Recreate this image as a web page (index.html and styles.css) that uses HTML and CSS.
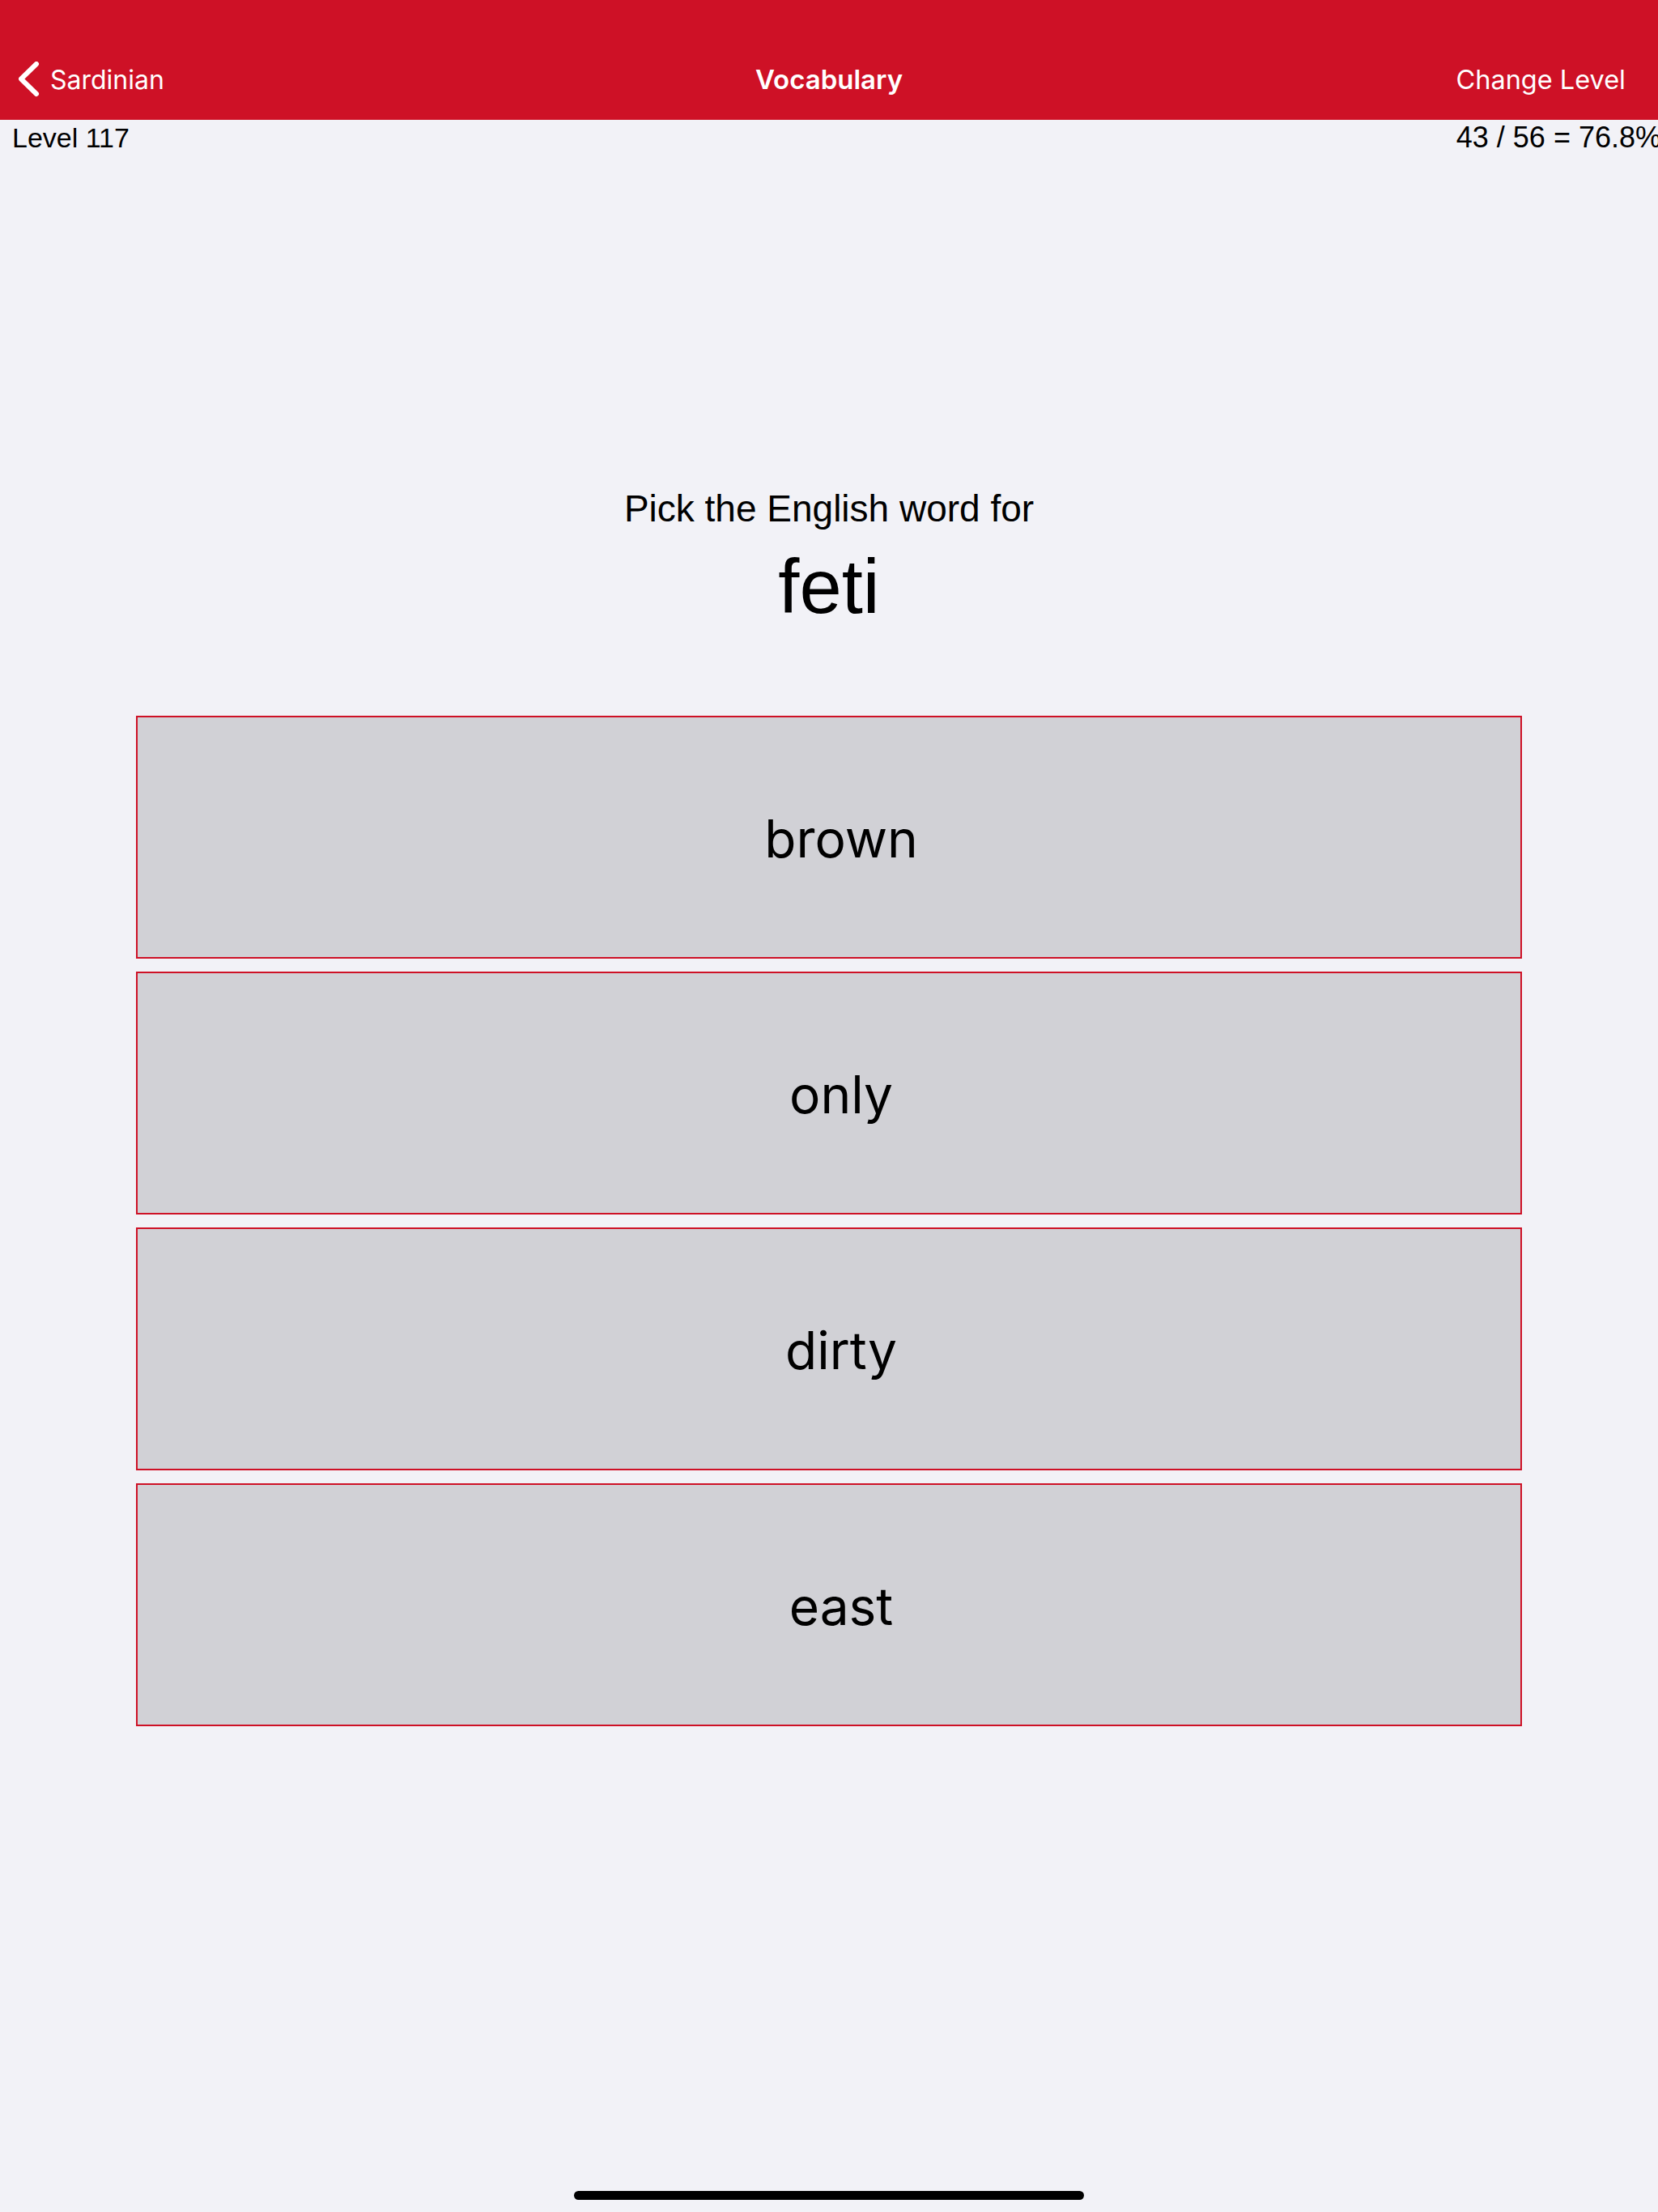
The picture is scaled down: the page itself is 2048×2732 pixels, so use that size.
FILE: index.html
```html
<!DOCTYPE html>
<html lang="en">
<head>
<meta charset="utf-8">
<title>Vocabulary</title>
<link rel="stylesheet" href="styles.css">
</head>
<body>
<div class="screen">
  <header class="navbar">
    <div class="nav-row">
      <a class="nav-back" href="#">
        <svg class="chevron" width="26" height="44" viewBox="0 0 26 44" aria-hidden="true">
          <path d="M22 3 L3 21.5 L22 40" fill="none" stroke="#fff" stroke-width="6" stroke-linecap="round" stroke-linejoin="round"/>
        </svg>
        <span>Sardinian</span>
      </a>
      <div class="nav-title">Vocabulary</div>
      <a class="nav-action" href="#">Change Level</a>
    </div>
  </header>

  <div class="stats">
    <span class="level">Level 117</span>
    <span class="score">43 / 56 = 76.8%</span>
  </div>

  <main class="quiz">
    <p class="prompt">Pick the English word for</p>
    <h1 class="word">feti</h1>
    <div class="choices">
      <button class="choice">brown</button>
      <button class="choice">only</button>
      <button class="choice">dirty</button>
      <button class="choice">east</button>
    </div>
  </main>

  <div class="home-indicator"></div>
</div>
</body>
</html>
```

FILE: styles.css
```css
html, body {
  margin: 0;
  padding: 0;
}

body {
  background: #f2f2f7;
  font-family: "Liberation Sans", Arial, sans-serif;
  color: #000;
  overflow: hidden;
}

.screen {
  width: 2048px;
  height: 2732px;
  display: flex;
  flex-direction: column;
  overflow: hidden;
}

/* red navigation bar with status-bar space on top */
.navbar {
  background: #ce1126;
  height: 148px;
  padding-top: 48px;
  box-sizing: border-box;
  flex-shrink: 0;
}

.nav-row {
  height: 100px;
  display: grid;
  grid-template-columns: 1fr auto 1fr;
  align-items: center;
  font-family: Inter, "Noto Sans", sans-serif;
  font-size: 33px;
  color: #fff;
}

.nav-row a {
  color: #fff;
  text-decoration: none;
}

.nav-back {
  display: flex;
  align-items: center;
  gap: 13px;
  padding-left: 23px;
  justify-self: start;
  font-size: 32px;
}

.chevron {
  display: block;
}

.nav-title {
  font-weight: 600;
}

.nav-action {
  justify-self: end;
  padding-right: 40px;
  font-size: 32.5px;
}

/* level and score line */
.stats {
  display: flex;
  justify-content: space-between;
  align-items: baseline;
  line-height: 44px;
  padding-left: 15px;
  margin-right: -4px;
  flex-shrink: 0;
}

.level {
  font-size: 34px;
}

.score {
  font-size: 36px;
}

.quiz {
  display: flex;
  flex-direction: column;
  align-items: center;
  padding-top: 409px;
}

.prompt {
  margin: 0;
  font-size: 46px;
  line-height: 54px;
}

.word {
  margin: 16px 0 0;
  font-size: 94px;
  font-weight: 400;
  line-height: 108px;
}

.choices {
  margin-top: 105px;
  width: 1712px;
  display: flex;
  flex-direction: column;
  gap: 16px;
}

.choice {
  height: 300px;
  box-sizing: border-box;
  border: 2px solid #ce1126;
  background: #d1d1d6;
  font-family: Inter, "Noto Sans", sans-serif;
  font-size: 64px;
  color: #000;
  padding: 2px 0 0 30px;
  display: flex;
  align-items: center;
  justify-content: center;
}

.home-indicator {
  margin: auto auto 15px;
  width: 630px;
  height: 11px;
  border-radius: 6px;
  background: #000;
  flex-shrink: 0;
}
```
